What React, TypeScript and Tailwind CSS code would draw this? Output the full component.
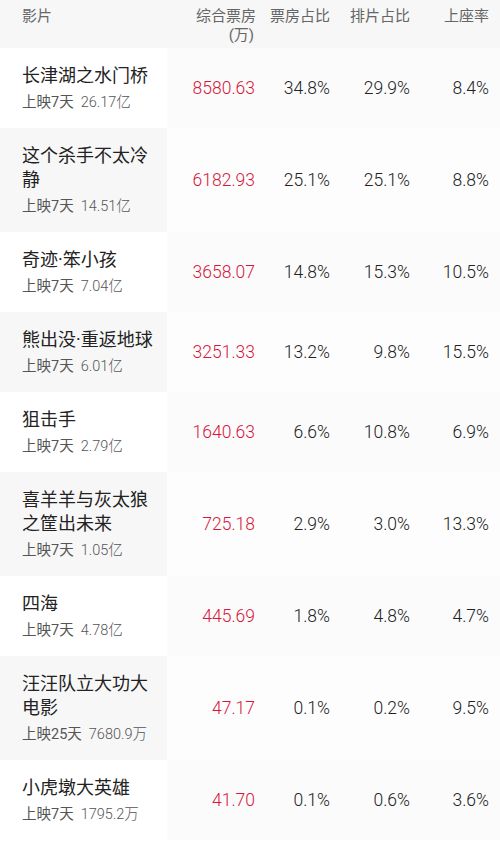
import React from "react";

type Row = {
  t: string;
  d: string;
  s: string;
  b: string;
  p1: string;
  p2: string;
  p3: string;
};

const rows: Row[] = [
  { t: "长津湖之水门桥", d: "上映7天", s: "26.17亿", b: "8580.63", p1: "34.8%", p2: "29.9%", p3: "8.4%" },
  { t: "这个杀手不太冷静", d: "上映7天", s: "14.51亿", b: "6182.93", p1: "25.1%", p2: "25.1%", p3: "8.8%" },
  { t: "奇迹·笨小孩", d: "上映7天", s: "7.04亿", b: "3658.07", p1: "14.8%", p2: "15.3%", p3: "10.5%" },
  { t: "熊出没·重返地球", d: "上映7天", s: "6.01亿", b: "3251.33", p1: "13.2%", p2: "9.8%", p3: "15.5%" },
  { t: "狙击手", d: "上映7天", s: "2.79亿", b: "1640.63", p1: "6.6%", p2: "10.8%", p3: "6.9%" },
  { t: "喜羊羊与灰太狼之筐出未来", d: "上映7天", s: "1.05亿", b: "725.18", p1: "2.9%", p2: "3.0%", p3: "13.3%" },
  { t: "四海", d: "上映7天", s: "4.78亿", b: "445.69", p1: "1.8%", p2: "4.8%", p3: "4.7%" },
  { t: "汪汪队立大功大电影", d: "上映25天", s: "7680.9万", b: "47.17", p1: "0.1%", p2: "0.2%", p3: "9.5%" },
  { t: "小虎墩大英雄", d: "上映7天", s: "1795.2万", b: "41.70", p1: "0.1%", p2: "0.6%", p3: "3.6%" },
];

const font = { fontFamily: '"Roboto", "Noto Sans CJK SC", sans-serif' };

export default function App() {
  return (
    <div className="w-[500px] h-[842px] overflow-hidden bg-white" style={font}>
      <div className="grid grid-cols-[167px_101px_75px_80px_77px] h-[48px] bg-[#f7f7f7] text-[15px] leading-[19px] text-[#666]">
        <div className="pl-[22px] pt-[7px]">影片</div>
        <div className="pr-[12px] pt-[7px] text-right">
          <div>综合票房</div>
          <div className="pr-[2px]">(万)</div>
        </div>
        <div className="pr-[13px] pt-[7px] text-right">票房占比</div>
        <div className="pr-[13px] pt-[7px] text-right">排片占比</div>
        <div className="pr-[11px] pt-[7px] text-right">上座率</div>
      </div>
      {rows.map((r, i) => {
        const even = i % 2 === 1;
        return (
          <div
            key={i}
            className={`grid grid-cols-[167px_101px_75px_80px_77px] ${even ? "bg-[#fdfdfd]" : "bg-[#fbfbfb]"}`}
          >
            <div
              className={`pl-[22px] pr-[10px] py-[15.5px] min-h-[80px] flex flex-col justify-center ${
                even ? "bg-[#f7f7f7]" : "bg-white"
              }`}
            >
              <div className="text-[18px] leading-[24px] text-[#222]">{r.t}</div>
              <div className="mt-[5px] text-[14.5px] leading-[20px] text-[#555] whitespace-nowrap">
                {r.d}
                <span className="ml-[7px] font-light">{r.s}</span>
              </div>
            </div>
            <div className="flex items-center justify-end pr-[13px] text-[17.5px] font-light text-[#d6173c]">{r.b}</div>
            <div className="flex items-center justify-end pr-[13px] text-[17.5px] font-light text-[#222]">{r.p1}</div>
            <div className="flex items-center justify-end pr-[13px] text-[17.5px] font-light text-[#222]">{r.p2}</div>
            <div className="flex items-center justify-end pr-[11px] text-[17.5px] font-light text-[#222]">{r.p3}</div>
          </div>
        );
      })}
    </div>
  );
}
